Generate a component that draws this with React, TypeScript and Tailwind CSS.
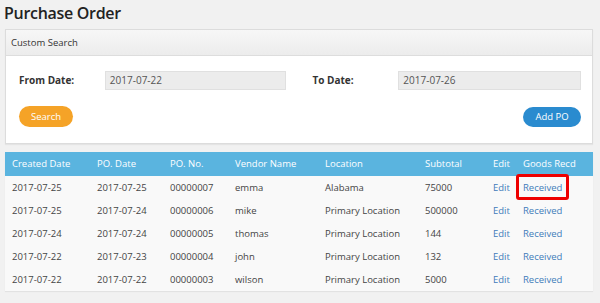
import React from "react";

const rows = [
  ["2017-07-25", "2017-07-25", "00000007", "emma", "Alabama", "75000"],
  ["2017-07-25", "2017-07-24", "00000006", "mike", "Primary Location", "500000"],
  ["2017-07-24", "2017-07-24", "00000005", "thomas", "Primary Location", "144"],
  ["2017-07-22", "2017-07-23", "00000004", "john", "Primary Location", "132"],
  ["2017-07-22", "2017-07-22", "00000003", "wilson", "Primary Location", "5000"],
];

const cols = "grid grid-cols-[85px_73px_65px_90px_100px_68px_30px_1fr]";

export default function App() {
  return (
    <div className="w-[600px] h-[303px] bg-[#f1f1f1] overflow-hidden text-[#333]" style={{ fontFamily: '"Open Sans", "Noto Sans", sans-serif' }}>
      <h1 className="pl-[4px] pt-[2px] h-[29px] text-[16px] leading-[22px] tracking-[-0.3px] font-semibold text-[#222]">Purchase Order</h1>
      <div className="ml-[5px] mr-[7px] bg-white border border-[#dcdcdc] shadow-[0_1px_1px_rgba(0,0,0,0.05)]">
        <div className="h-[26px] flex items-center pl-[5px] pt-[1px] text-[9.5px] text-[#333] bg-gradient-to-b from-[#f7f7f7] to-[#ececec] border-b border-[#dddddd]">
          Custom Search
        </div>
        <div className="h-[87px] pt-[15px] pl-[13px] pr-[11px]">
          <div className="flex items-center h-[19px]">
            <div className="w-[86px] text-[10px] font-bold text-[#333]">From Date:</div>
            <div className="w-[181px] h-[19px] bg-[#ececec] border border-[#e0e0e0] text-[10px] leading-[17px] pl-[4px] text-[#555]">2017-07-22</div>
            <div className="w-[113px] pl-[27px] text-[10px] font-bold text-[#333]">To Date:</div>
            <div className="w-[183px] h-[19px] bg-[#ececec] border border-[#e0e0e0] text-[10px] leading-[17px] pl-[4px] text-[#555]">2017-07-26</div>
          </div>
          <div className="flex justify-between items-center mt-[16px]">
            <button className="w-[54px] h-[21px] rounded-full bg-[#f5a327] text-white text-[9.5px] leading-[21px]">Search</button>
            <button className="w-[58px] h-[20px] rounded-full bg-[#2a8bcf] text-white text-[9.5px] leading-[20px]">Add PO</button>
          </div>
        </div>
      </div>
      <div className="ml-[5px] mr-[7px] mt-[8px] bg-[#f9f9f9] shadow-[0_1px_1px_rgba(0,0,0,0.06)]">
        <div className={`${cols} h-[24px] bg-[#5ab4df] text-white text-[9.5px]`}>
          {["Created Date", "PO. Date", "PO. No.", "Vendor Name", "Location", "Subtotal", "Edit", "Goods Recd"].map((h) => (
            <div key={h} className="pl-[7px] pt-[1px] flex items-center whitespace-nowrap">{h}</div>
          ))}
        </div>
        {rows.map((r, i) => (
          <div key={i} className={`${cols} h-[23px] text-[9.5px] text-[#444]`}>
            {r.map((c, j) => (
              <div key={j} className="pl-[7px] pt-[2px] flex items-center whitespace-nowrap">{c}</div>
            ))}
            <div className="pl-[7px] pt-[2px] flex items-center text-[#3f7cb9]">Edit</div>
            <div className="relative pl-[7px] pt-[2px] flex items-center text-[#3f7cb9]">
              Received
              {i === 0 && (
                <span className="absolute left-0 top-[-2px] w-[53px] h-[26px] border-[3px] border-[#ee0000] rounded-[3px]" />
              )}
            </div>
          </div>
        ))}
      </div>
    </div>
  );
}
